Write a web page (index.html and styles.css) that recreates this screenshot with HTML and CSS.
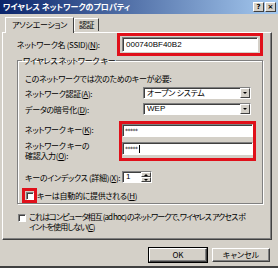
FILE: index.html
```html
<!DOCTYPE html>
<html lang="ja">
<head>
    <meta charset="UTF-8">
    <title>ワイヤレス ネットワークのプロパティ</title>
    <link rel="stylesheet" href="styles.css">
</head>
<body>
  <div class="dialog">
    <div class="titlebar">
      <span class="title">ワイヤレス ネットワークのプロパティ</span>
      <div class="caption-btns">
        <span class="cap-btn">?</span>
        <span class="cap-btn">×</span>
      </div>
    </div>

    <div class="tabs">
      <span class="tab active">アソシエーション</span>
      <span class="tab">認証</span>
    </div>

    <div class="panel">
      <div class="row ssid-row">
        <label class="lbl-ssid">ネットワーク名 (SSID)(<u>N</u>):</label>
        <div class="mark mark-ssid">
          <div class="field">000740BF40B2</div>
        </div>
      </div>

      <fieldset class="group">
        <legend>ワイヤレス ネットワーク キー</legend>
        <p class="note">このネットワークでは次のためのキーが必要:</p>

        <div class="row sel-row first">
          <label class="lbl-sel">ネットワーク認証(<u>A</u>):</label>
          <div class="select">オープン システム<span class="drop"><span class="tri"></span></span></div>
        </div>
        <div class="row sel-row">
          <label class="lbl-sel">データの暗号化(<u>D</u>):</label>
          <div class="select latin">WEP<span class="drop"><span class="tri"></span></span></div>
        </div>

        <div class="row key-row">
          <div class="key-labels">
            <label class="key-l1">ネットワーク キー(<u>K</u>):</label>
            <label class="key-l2">ネットワーク キーの<br>確認入力(<u>O</u>):</label>
          </div>
          <div class="mark mark-keys">
            <div class="field">*****</div>
            <div class="field">*****<span class="caret"></span></div>
          </div>
        </div>

        <div class="row idx-row">
          <label class="lbl-idx">キーのインデックス (詳細)(<u>X</u>):</label>
          <div class="spin">
            <span class="spin-val">1</span>
            <span class="spin-btns">
              <span class="spin-btn"><span class="tri up"></span></span>
              <span class="spin-btn"><span class="tri"></span></span>
            </span>
          </div>
        </div>

        <div class="row auto-row">
          <div class="mark mark-check"><span class="check"></span></div>
          <label>キーは自動的に提供される(<u>H</u>)</label>
        </div>
      </fieldset>

      <div class="row adhoc-row">
        <span class="check"></span>
        <label>これはコンピュータ相互 (ad hoc) のネットワークで、ワイヤレス アクセス ポ<br>イントを使用しない(<u>C</u>)</label>
      </div>
    </div>

    <div class="footer">
      <button class="btn default">OK</button>
      <button class="btn">キャンセル</button>
    </div>
  </div>
</body>
</html>
```

FILE: styles.css
```css
* {
  box-sizing: border-box;
}
body {
  margin: 0;
  background-color: #d4d0c8;
  font-family: "Noto Sans CJK JP", sans-serif;
  font-size: 8px;
  font-feature-settings: "palt";
  letter-spacing: -0.3px;
  color: #000;
}
u {
  text-decoration-thickness: 1px;
}
.dialog {
  width: 278px;
  height: 268px;
  background-color: #d4d0c8;
  border-bottom: 2px solid #404040;
  display: flex;
  flex-direction: column;
}

/* title bar */
.titlebar {
  height: 14px;
  background: linear-gradient(to right, #0a246a, #a6caf0);
  display: flex;
  align-items: center;
  justify-content: space-between;
  padding: 0 2px 0 3px;
}
.title {
  color: #fff;
  font-weight: bold;
  font-size: 8px;
  line-height: 14px;
  letter-spacing: 0;
}
.caption-btns {
  display: flex;
  gap: 1px;
}
.cap-btn {
  width: 11px;
  height: 10px;
  background: #d4d0c8;
  border: 1px solid;
  border-color: #fff #404040 #404040 #fff;
  font-family: "DejaVu Sans", sans-serif;
  font-weight: bold;
  font-size: 7px;
  line-height: 8px;
  letter-spacing: 0;
  text-align: center;
}

/* tabs */
.tabs {
  display: flex;
  align-items: flex-end;
  height: 18px;
  padding-left: 5px;
  position: relative;
  z-index: 1;
}
.tab {
  height: 13px;
  line-height: 12px;
  padding: 0 4px;
  border: 1px solid;
  border-color: #fff #404040 transparent #fff;
  border-bottom: none;
  margin-bottom: 1px;
}
.tab.active {
  height: 16px;
  line-height: 14px;
  padding: 0 6px;
  margin-bottom: -1px;
  background: #d4d0c8;
}

/* panel */
.panel {
  height: 208px;
  margin: 0 6px 0 2px;
  border: 1px solid;
  border-color: #fff #404040 #404040 #fff;
  box-shadow: inset -1px -1px 0 #808080;
  padding: 0 9px 0 14px;
}
.row {
  display: flex;
  align-items: center;
}
label {
  white-space: nowrap;
}

.mark {
  border: 3px solid #e0101a;
}

.field {
  background: #fff;
  border: 1px solid;
  border-color: #808080 #fff #fff #808080;
  box-shadow: inset 1px 1px 0 #404040;
  font-family: "Liberation Sans", sans-serif;
  font-size: 8px;
  letter-spacing: 0;
  line-height: 11px;
  padding: 0 3px;
  display: flex;
  align-items: center;
}

.ssid-row {
  height: 23px;
}
.lbl-ssid {
  width: 100px;
  flex: none;
}
.mark-ssid {
  flex: none;
  width: 146px;
  height: 23px;
  padding: 1px 2px;
}
.mark-ssid .field {
  height: 15px;
}

/* group box */
.group {
  width: 244px;
  margin: 0;
  padding: 0 6px 0 7px;
  border: 1px solid #808080;
  box-shadow: inset 1px 1px 0 #fff, 1px 1px 0 #fff;
  height: 148px;
}
.group legend {
  padding: 0 1px;
  margin-left: -3px;
  line-height: 9px;
}
.note {
  margin: 9px 0 0;
  line-height: 10px;
}

.sel-row {
  margin-top: 4px;
}
.sel-row.first {
  margin-top: 3px;
}
.lbl-sel {
  width: 118px;
  flex: none;
}
.select {
  width: 108px;
  height: 12px;
  background: #fff;
  border: 1px solid;
  border-color: #808080 #fff #fff #808080;
  box-shadow: inset 1px 1px 0 #404040;
  padding-left: 3px;
  line-height: 10px;
  display: flex;
  justify-content: space-between;
  align-items: center;
}
.select.latin {
  font-family: "Liberation Sans", sans-serif;
  letter-spacing: 0;
}
.drop {
  width: 10px;
  height: 10px;
  background: #d4d0c8;
  border: 1px solid;
  border-color: #fff #404040 #404040 #fff;
  display: flex;
  align-items: center;
  justify-content: center;
}
.tri {
  width: 0;
  height: 0;
  border-left: 2px solid transparent;
  border-right: 2px solid transparent;
  border-top: 2px solid #000;
}
.tri.up {
  border-top: none;
  border-bottom: 2px solid #000;
}

/* key fields */
.key-row {
  margin-top: 6px;
  align-items: stretch;
}
.key-labels {
  width: 94px;
  flex: none;
  display: flex;
  flex-direction: column;
  line-height: 10px;
}
.key-l1 {
  margin-top: 4px;
}
.key-l2 {
  margin-top: 6px;
}
.mark-keys {
  width: 137px;
  height: 40px;
  padding: 0 0 2px;
  display: flex;
  flex-direction: column;
  gap: 5px;
}
.mark-keys .field {
  height: 13px;
  width: 131px;
  font-family: "DejaVu Sans", sans-serif;
  font-size: 6px;
  letter-spacing: -0.5px;
  padding-left: 2px;
}
.caret {
  width: 1px;
  height: 8px;
  background: #000;
  margin-left: 1px;
}

/* key index */
.idx-row {
  margin-top: 10px;
}
.lbl-idx {
  width: 97px;
  flex: none;
}
.spin {
  width: 30px;
  height: 12px;
  background: #fff;
  border: 1px solid;
  border-color: #808080 #fff #fff #808080;
  box-shadow: inset 1px 1px 0 #404040;
  display: flex;
  justify-content: space-between;
  font-family: "Liberation Sans", sans-serif;
  letter-spacing: 0;
  line-height: 10px;
  padding-left: 3px;
}
.spin-btns {
  width: 10px;
  display: flex;
  flex-direction: column;
}
.spin-btn {
  flex: 1;
  background: #d4d0c8;
  border: 1px solid;
  border-color: #fff #404040 #404040 #fff;
  display: flex;
  align-items: center;
  justify-content: center;
}

/* checkboxes */
.check {
  display: block;
  width: 8px;
  height: 8px;
  flex: none;
  background: #fff;
  border: 1px solid;
  border-color: #808080 #fff #fff #808080;
  box-shadow: inset 1px 1px 0 #404040;
}
.auto-row {
  margin-top: 5px;
  margin-left: -3px;
}
.mark-check {
  width: 15px;
  height: 15px;
  padding: 1px;
  display: flex;
  align-items: center;
  justify-content: center;
}
.adhoc-row {
  margin-top: 8px;
  margin-left: 1px;
  align-items: flex-start;
}
.adhoc-row .check {
  margin-top: 2px;
}
.adhoc-row label {
  margin-left: 3px;
  line-height: 10px;
  letter-spacing: -0.9px;
}

/* buttons */
.footer {
  display: flex;
  justify-content: flex-end;
  gap: 5px;
  padding: 8px 8px 0 0;
}
.btn {
  width: 58px;
  height: 14px;
  padding: 0;
  background: #d4d0c8;
  border: 1px solid;
  border-color: #fff #404040 #404040 #fff;
  box-shadow: inset -1px -1px 0 #808080;
  font-family: "Noto Sans CJK JP", sans-serif;
  font-feature-settings: "palt";
  font-size: 8px;
  line-height: 12px;
  color: #000;
}
.btn.default {
  outline: 1px solid #000;
}
```
